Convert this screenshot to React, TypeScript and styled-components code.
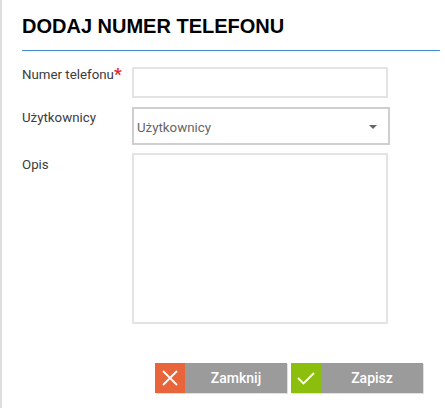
import styled, { createGlobalStyle } from "styled-components";

const GlobalStyle = createGlobalStyle`
  * {
    box-sizing: border-box;
  }
  body {
    margin: 0;
    background: #fff;
    font-family: Roboto, "Liberation Sans", Arial, sans-serif;
  }
`;

const Panel = styled.div`
  min-height: 408px;
  border-left: 2px solid #dedede;
  padding: 15px 5px 0 20px;
`;

const Header = styled.div`
  border-bottom: 1px solid #3f8ccf;
  padding-bottom: 12px;
`;

const Title = styled.h1`
  margin: 0;
  font-family: "Liberation Sans", Arial, sans-serif;
  font-size: 20px;
  line-height: 23px;
  font-weight: 700;
  color: #000;
`;

const Form = styled.div`
  display: flex;
  flex-direction: column;
  margin-top: 16px;
`;

const Row = styled.div<{ $gap?: number }>`
  display: grid;
  grid-template-columns: 110px auto;
  align-items: start;
  margin-top: ${(p) => p.$gap ?? 0}px;
`;

const Label = styled.label<{ $offset: number }>`
  padding-top: ${(p) => p.$offset}px;
  font-size: 13.3px;
  color: #3c3c3c;
  line-height: normal;
`;

const Required = styled.span`
  color: #e8262b;
  font-size: 17px;
  font-weight: 700;
  line-height: 0;
  position: relative;
  top: 1px;
`;

const TextInput = styled.div`
  width: 256px;
  height: 31px;
  border: 2px solid #e3e3e3;
  background: #fff;
`;

const Select = styled.div`
  width: 258px;
  height: 38px;
  border: 2px solid #cfcfcf;
  background: #fff;
  display: flex;
  align-items: center;
  justify-content: space-between;
  padding: 3px 11px 0 3px;
  font-size: 13.3px;
  color: #666;
`;

const Caret = styled.span`
  width: 0;
  height: 0;
  border-left: 4px solid transparent;
  border-right: 4px solid transparent;
  border-top: 4px solid #666;
  margin-top: -1px;
`;

const TextArea = styled.div`
  width: 256px;
  height: 171px;
  border: 2px solid #e3e3e3;
  background: #fff;
`;

const Footer = styled.div`
  display: flex;
  justify-content: flex-end;
  gap: 4px;
  margin-top: 39px;
  padding-right: 17px;
`;

const Button = styled.button`
  display: flex;
  width: 132px;
  height: 30px;
  padding: 0;
  border: 0;
  background: #9b9b9b;
  box-shadow: 1px 1px 0 rgba(0, 0, 0, 0.12);
  cursor: pointer;
`;

const IconBox = styled.span<{ $color: string }>`
  width: 30px;
  height: 30px;
  background: ${(p) => p.$color};
  display: flex;
  align-items: center;
  justify-content: center;
`;

const ButtonText = styled.span`
  flex: 1;
  display: flex;
  align-items: center;
  justify-content: center;
  color: #fff;
  font-family: Roboto, "Liberation Sans", sans-serif;
  font-size: 14px;
  font-weight: 500;
`;

const CloseIcon = () => (
  <svg width="16" height="16" viewBox="0 0 16 16">
    <path d="M1 1 L15 15 M15 1 L1 15" stroke="#fff" strokeWidth="1.8" fill="none" />
  </svg>
);

const CheckIcon = () => (
  <svg width="20" height="14" viewBox="0 0 20 14">
    <path d="M2 7 L7.5 12.5 L18 2" stroke="#fff" strokeWidth="1.8" fill="none" />
  </svg>
);

export default function App() {
  return (
    <>
      <GlobalStyle />
      <Panel>
        <Header>
          <Title>DODAJ NUMER TELEFONU</Title>
        </Header>
        <Form>
          <Row>
            <Label $offset={0}>
              Numer telefonu<Required>*</Required>
            </Label>
            <TextInput />
          </Row>
          <Row $gap={9}>
            <Label $offset={3}>Użytkownicy</Label>
            <Select>
              Użytkownicy
              <Caret />
            </Select>
          </Row>
          <Row $gap={8}>
            <Label $offset={4}>Opis</Label>
            <TextArea />
          </Row>
        </Form>
        <Footer>
          <Button>
            <IconBox $color="#e8643b">
              <CloseIcon />
            </IconBox>
            <ButtonText>Zamknij</ButtonText>
          </Button>
          <Button>
            <IconBox $color="#8cbf0d">
              <CheckIcon />
            </IconBox>
            <ButtonText>Zapisz</ButtonText>
          </Button>
        </Footer>
      </Panel>
    </>
  );
}
